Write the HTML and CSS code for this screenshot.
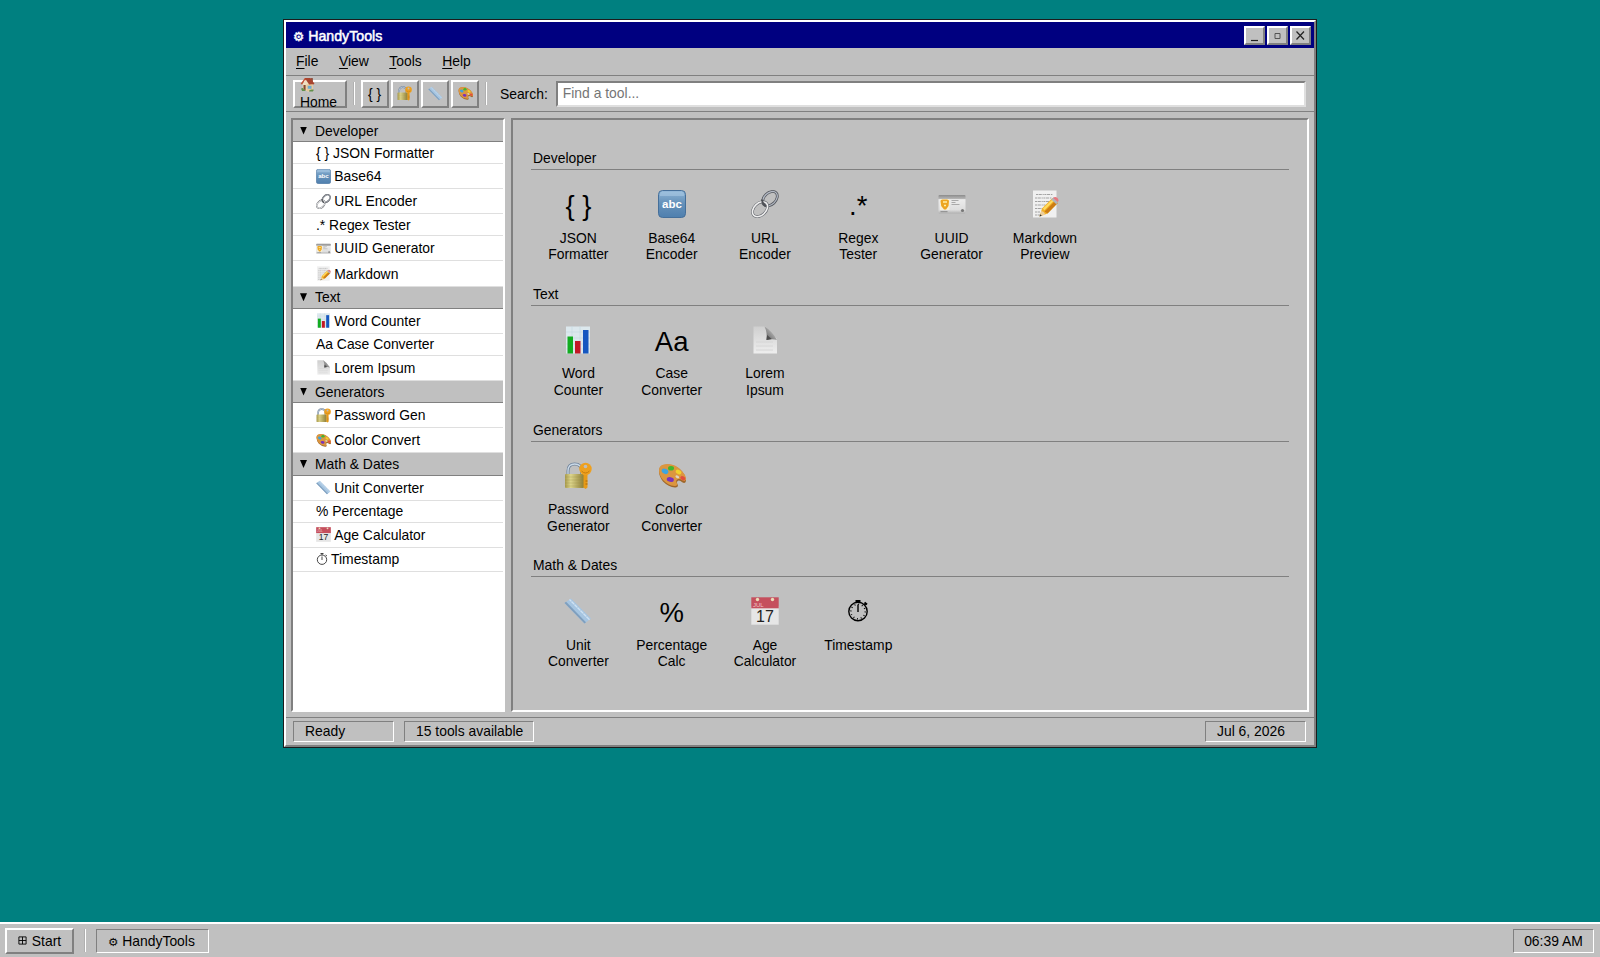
FILE: index.html
```
<!DOCTYPE html>
<html lang="en">
<head>
  <meta charset="UTF-8" />
  <meta name="viewport" content="width=device-width, initial-scale=1.0" />
  <title>HandyTools</title>
  <link rel="stylesheet" href="styles.css">
</head>
<body>
  <!-- icon sprite -->
  <svg class="sprite" width="0" height="0" aria-hidden="true">
    <defs>
      <linearGradient id="gBlue" x1="0" y1="0" x2="0" y2="1"><stop offset="0" stop-color="#8db4d6"/><stop offset=".45" stop-color="#6793bb"/><stop offset="1" stop-color="#4f7fae"/></linearGradient>
      <linearGradient id="gGold" x1="0" y1="0" x2="1" y2="0"><stop offset="0" stop-color="#a99b4c"/><stop offset=".3" stop-color="#ddd58b"/><stop offset="1" stop-color="#8d7d35"/></linearGradient>
      <linearGradient id="gPaper" x1="0" y1="0" x2="0" y2="1"><stop offset="0" stop-color="#cfcfcf"/><stop offset="1" stop-color="#eeeeee"/></linearGradient>
      <linearGradient id="gCurl" x1="0" y1="1" x2="1" y2="0"><stop offset="0" stop-color="#555"/><stop offset=".6" stop-color="#aaa"/><stop offset="1" stop-color="#f4f4f4"/></linearGradient>
      <linearGradient id="gCard" x1="0" y1="0" x2="0" y2="1"><stop offset="0" stop-color="#8c8c8c"/><stop offset=".2" stop-color="#b5b5b5"/><stop offset=".25" stop-color="#ececec"/><stop offset=".8" stop-color="#dedede"/><stop offset="1" stop-color="#b0b0b0"/></linearGradient>

      <symbol id="abc" viewBox="0 0 28 28">
        <rect x=".5" y=".5" width="27" height="27" rx="4" fill="url(#gBlue)" stroke="#456f9a"/>
        <path d="M2 4q0-2.500 3-2.500h18q3 0 3 2.500v2H2z" fill="#a9c8e2" opacity=".6"/>
        <text x="14" y="17.500" text-anchor="middle" class="abc-text">abc</text>
      </symbol>

      <symbol id="link" viewBox="0 0 28 28">
        <g fill="none">
          <ellipse cx="19" cy="8.700" rx="8.500" ry="5.800" transform="rotate(-44 19 8.700)" stroke="#55585e" stroke-width="2.800"/>
          <ellipse cx="19" cy="8.700" rx="8.500" ry="5.800" transform="rotate(-44 19 8.700)" stroke="#b4bac5" stroke-width="1.200"/>
          <ellipse cx="9" cy="19.200" rx="8.800" ry="6" transform="rotate(-44 9 19.200)" stroke="#66696f" stroke-width="2.800"/>
          <ellipse cx="9" cy="19.200" rx="8.800" ry="6" transform="rotate(-44 9 19.200)" stroke="#efefef" stroke-width="1.600"/>
          <path d="M11 9.500q0 4 4 7" stroke="#4e5055" stroke-width="2"/>
        </g>
      </symbol>

      <symbol id="idcard" viewBox="0 0 28 28">
        <rect x=".5" y="5" width="27" height="18.500" rx="1" fill="url(#gCard)"/>
        <rect x="2" y="9" width="9.500" height="11" fill="#f7f0d9"/>
        <path d="M2.500 11q0-1.500 2-1.500h4.500q2 0 2 1.500l-.5 5-2.500 3.500H6L3.200 16z" fill="#eda51f"/>
        <path d="M5 12h4M6 15.500h2" stroke="#fff0a5" stroke-width="1.500"/>
        <path d="M13.500 10.500h7M13.500 12.500h4M13.500 14.500h8" stroke="#999" stroke-width=".8"/>
        <path d="M2.500 21.700h7" stroke="#777" stroke-width=".8"/>
        <circle cx="24.500" cy="20.500" r="1.600" fill="#777"/>
      </symbol>

      <symbol id="memo" viewBox="0 0 28 28">
        <path d="M2 .5h23.500v27H2z" fill="#f0f0f0"/>
        <g fill="none" stroke="#999" stroke-width=".9" stroke-dasharray="2 .6 3.200 .8 1.200 .6">
          <path d="M5 4.500h17M4 8h17M4 11.500h14M4 15h11M4 18.500h8M4 22h5M4 25h5"/>
        </g>
        <path d="M8.500 26.500l2.500-8L21.500 8l5.300 5-10.300 10.500z" fill="#f2b025"/>
        <path d="M13.500 21.500L24 11l2.800 2-10.300 10.500z" fill="#cc7c14"/>
        <path d="M12 18.500l10-9.500 1.300 1.200-10 10z" fill="#ffdc62"/>
        <path d="M20.300 9.500l2.200-2.200 4.800 4.300-2 2.600z" fill="#aeb5bd"/>
        <path d="M22 8q2-2 4.300-.2 2 2 .5 4.300z" fill="#e7787f"/>
        <path d="M8.500 26.500l1.900-5.700q3 .9 4 3.700z" fill="#edcf9c"/>
        <path d="M8.500 26.500l.8-2.300 1.500 1.500z" fill="#333"/>
      </symbol>

      <symbol id="chart" viewBox="0 0 28 28">
        <rect x="2" y=".5" width="24" height="27" fill="#dce8ed"/>
        <path d="M2 6h24M2 12h24M2 18h24M2 23h24M8 0v28M16 0v28" stroke="#c5d7df" stroke-width=".6"/>
        <rect x="3.500" y="10.500" width="5.500" height="17" fill="#12ac20"/>
        <rect x="11" y="15" width="5.500" height="12.500" fill="#c31826"/>
        <rect x="19" y="4" width="5.500" height="23.500" fill="#1557c0"/>
      </symbol>

      <symbol id="page" viewBox="0 0 28 28">
        <path d="M2.500.5H14L26 13v14.500H2.500z" fill="url(#gPaper)"/>
        <path d="M5 16h17M5 20h17M5 24h17" stroke="#d6d6d6" stroke-width="1"/>
        <path d="M13.500.5q3 6 2 13.500 6-1.700 10.500 0Q21 5 13.500.5z" fill="url(#gCurl)"/>
        <path d="M15.500 14l.6-5 4.500 4z" fill="#4d4d4d"/>
      </symbol>

      <symbol id="lock" viewBox="0 0 28 28">
        <path d="M4 14V9q0-7 6.700-7 6.800 0 6.800 7v4" fill="none" stroke="#71849b" stroke-width="3"/>
        <path d="M4 14V9q0-7 6.700-7 6.800 0 6.800 7v4" fill="none" stroke="#cbdae8" stroke-width="1.300"/>
        <rect x="1" y="12" width="19" height="14" rx="1" fill="url(#gGold)"/>
        <path d="M1 15h19M1 18h19M1 21h19M1 24h19" stroke="#8f833e" stroke-width=".25"/>
        <path d="M19.500 12h4v13.500l-2 1.500-2-1.500z" fill="#e79a17"/>
        <path d="M23.500 19h-2M23.500 22h-2" stroke="#a9650b" stroke-width="1"/>
        <circle cx="21.500" cy="7" r="6.200" fill="#eea01f"/>
        <circle cx="21.500" cy="4.500" r="1.800" fill="#bdbdbd"/>
        <path d="M17.500 9q4 4 8 0" fill="none" stroke="#c77c0d"/>
      </symbol>

      <symbol id="palette" viewBox="0 0 28 28">
        <path d="M1 9Q1 2.500 9.500 2.500q8.500.2 14.500 7 4.500 5 4 9.500-.8 3-3.800 1.200-3.200-2.700-5-.8-.8 1 .5 3.300 1 3-2.700 2.800-6.500-.4-12-6Q1 14.500 1 9z" fill="#9e672b"/>
        <path d="M1 8Q1 2 9.500 2q8.500.2 14.500 7 4.500 5 4 8.500-.8 2.500-3.800.7-3.200-2.200-5.500-.3-1 1.200.3 3.500 1 3-2.500 2.600-6.500-.4-11.500-6Q1 13.500 1 8z" fill="#dc963f"/>
        <ellipse cx="7" cy="9.300" rx="3.500" ry="2.500" transform="rotate(25 7 9.300)" fill="#3da5df"/>
        <ellipse cx="13" cy="6.200" rx="3" ry="2.300" fill="#41b62d"/>
        <ellipse cx="20.500" cy="10" rx="3" ry="2.100" transform="rotate(30 20.500 10)" fill="#f1d22b"/>
        <ellipse cx="12.300" cy="17.500" rx="3.600" ry="2.400" transform="rotate(10 12.300 17.500)" fill="#7b33bb"/>
        <ellipse cx="24.800" cy="16.200" rx="2.600" ry="1.900" transform="rotate(30 24.800 16.200)" fill="#e24d3c"/>
        <ellipse cx="19.300" cy="14.800" rx="2" ry="1.300" transform="rotate(30 19.300 14.800)" fill="#ddd4c5"/>
      </symbol>

      <symbol id="ruler" viewBox="0 0 28 28">
        <path d="M.5 6L7 1.500 27 21.500l-6.500 5z" fill="#a6c5e1"/>
        <path d="M.5 6l1.600-1.200L22 25.300l-1.500 1.200z" fill="#7f9fbe"/>
        <path d="M5.500 2.500L25.500 22.700" stroke="#cfe2f3" stroke-width="1.300"/>
        <path d="M8.500 3.500l-2 1.500M11.500 6.500l-2 1.500M14.500 9.500l-2 1.500M17.500 12.500l-2 1.500M20.500 15.500l-2 1.500M23.500 18.500l-2 1.500" stroke="#9ab8d3" stroke-width=".5"/>
      </symbol>

      <symbol id="calendar" viewBox="0 0 28 28">
        <rect x=".3" y="9" width="27.400" height="18.700" fill="#e6e6e6"/>
        <rect x=".3" y=".3" width="27.400" height="11" fill="#c54f5d"/>
        <circle cx="6.500" cy="2.500" r="1.700" fill="#eadbb8"/>
        <circle cx="21.500" cy="2.500" r="1.700" fill="#eadbb8"/>
        <text x="2" y="10" class="cal-month">JUL</text>
        <text x="14" y="25" text-anchor="middle" class="cal-day">17</text>
      </symbol>

      <symbol id="stopwatch" viewBox="0 0 28 28">
        <g fill="none" stroke="#000">
          <circle cx="14" cy="14.500" r="9.200" stroke-width="1.400"/>
          <circle cx="14" cy="14.500" r="7.200" stroke-width="1.500" stroke-dasharray=".9 2.870"/>
          <path d="M14 15V7.500M14 5V3.500M20.500 8l1.500-1.500" stroke-width="1.400"/>
          <path d="M11.500 4h5M20.500 5.500l2.500 2" stroke-width="2"/>
        </g>
      </symbol>

      <symbol id="watch-small" viewBox="0 0 14 14">
        <g fill="none" stroke="#333" stroke-width=".9">
          <circle cx="7" cy="7.700" r="4.700"/>
          <path d="M7 8V4.500M5.500 1.500h3M7 1.500V3M10.500 3l1.500 1"/>
        </g>
      </symbol>

      <symbol id="house" viewBox="0 0 28 28">
        <path d="M20 2h4v9h-4z" fill="#8c4e3b"/>
        <path d="M5 12l7-8 12 8v13l-9 2-10-4z" fill="#f0dfc1"/>
        <path d="M12 14l12-2v13l-9 2-3-1z" fill="#e5c89c"/>
        <path d="M1 13L9 2h10l8 11-3 1-7-9-8 1-5 8z" fill="#c45032"/>
        <path d="M9 2h10l8 11-10 1z" fill="#a84530"/>
        <path d="M6.500 15h4v10l-4-2z" fill="#874b2d"/>
        <path d="M14.500 16.500h7V22h-7z" fill="#6eacd0"/>
        <path d="M2 22q3-3 5 1l4 3H4zM17 25q5-3 9-1l-2 3h-7z" fill="#61904a"/>
      </symbol>
    </defs>
  </svg>

  <div class="desktop">
    <div class="window">
      <div class="title-bar">
        <div class="title-text"><span class="gear">⚙</span> HandyTools</div>
        <div class="title-buttons">
          <button><svg viewBox="0 0 17 15"><path d="M5 12.500h7" /></svg></button>
          <button><svg class="dim" viewBox="0 0 17 15"><path d="M6 5.500h5v5h-5z" /></svg></button>
          <button><svg viewBox="0 0 17 15"><path d="M4.500 3.500l7.500 8M12 3.500l-7.500 8" /></svg></button>
        </div>
      </div>

      <div class="menu-bar">
        <span><u>F</u>ile</span>
        <span><u>V</u>iew</span>
        <span><u>T</u>ools</span>
        <span><u>H</u>elp</span>
      </div>

      <div class="toolbar">
        <button class="tool-btn home-btn"><svg class="icon"><use href="#house"/></svg><span>Home</span></button>
        <div class="separator"></div>
        <div class="tool-group">
          <button class="tool-btn">{ }</button>
          <button class="tool-btn"><svg class="icon"><use href="#lock"/></svg></button>
          <button class="tool-btn"><svg class="icon"><use href="#ruler"/></svg></button>
          <button class="tool-btn"><svg class="icon"><use href="#palette"/></svg></button>
        </div>
        <div class="separator"></div>
        <label for="search">Search:</label>
        <input id="search" type="text" placeholder="Find a tool...">
      </div>

      <div class="main">
        <div class="sidebar">
          <div class="category"><span class="arrow"></span>Developer</div>
          <div class="item">{ } JSON Formatter</div>
          <div class="item pic"><svg class="icon"><use href="#abc"/></svg>Base64</div>
          <div class="item pic"><svg class="icon"><use href="#link"/></svg>URL Encoder</div>
          <div class="item">.* Regex Tester</div>
          <div class="item pic"><svg class="icon"><use href="#idcard"/></svg>UUID Generator</div>
          <div class="item pic"><svg class="icon"><use href="#memo"/></svg>Markdown</div>
          <div class="category"><span class="arrow"></span>Text</div>
          <div class="item pic"><svg class="icon"><use href="#chart"/></svg>Word Counter</div>
          <div class="item">Aa Case Converter</div>
          <div class="item pic"><svg class="icon"><use href="#page"/></svg>Lorem Ipsum</div>
          <div class="category"><span class="arrow"></span>Generators</div>
          <div class="item pic"><svg class="icon"><use href="#lock"/></svg>Password Gen</div>
          <div class="item pic"><svg class="icon"><use href="#palette"/></svg>Color Convert</div>
          <div class="category"><span class="arrow"></span>Math &amp; Dates</div>
          <div class="item pic"><svg class="icon"><use href="#ruler"/></svg>Unit Converter</div>
          <div class="item">% Percentage</div>
          <div class="item pic"><svg class="icon"><use href="#calendar"/></svg>Age Calculator</div>
          <div class="item watch"><svg class="icon"><use href="#watch-small"/></svg>Timestamp</div>
        </div>

        <div class="content">
          <div class="section">
            <div class="section-title">Developer</div>
            <div class="tiles">
              <div class="tile"><div class="tile-icon">{ }</div>JSON<br>Formatter</div>
              <div class="tile"><div class="tile-icon"><svg><use href="#abc"/></svg></div>Base64<br>Encoder</div>
              <div class="tile"><div class="tile-icon"><svg><use href="#link"/></svg></div>URL<br>Encoder</div>
              <div class="tile"><div class="tile-icon">.*</div>Regex<br>Tester</div>
              <div class="tile"><div class="tile-icon"><svg><use href="#idcard"/></svg></div>UUID<br>Generator</div>
              <div class="tile"><div class="tile-icon"><svg><use href="#memo"/></svg></div>Markdown<br>Preview</div>
            </div>
          </div>
          <div class="section">
            <div class="section-title">Text</div>
            <div class="tiles">
              <div class="tile"><div class="tile-icon"><svg><use href="#chart"/></svg></div>Word<br>Counter</div>
              <div class="tile"><div class="tile-icon">Aa</div>Case<br>Converter</div>
              <div class="tile"><div class="tile-icon"><svg><use href="#page"/></svg></div>Lorem<br>Ipsum</div>
            </div>
          </div>
          <div class="section">
            <div class="section-title">Generators</div>
            <div class="tiles">
              <div class="tile"><div class="tile-icon"><svg><use href="#lock"/></svg></div>Password<br>Generator</div>
              <div class="tile"><div class="tile-icon"><svg><use href="#palette"/></svg></div>Color<br>Converter</div>
            </div>
          </div>
          <div class="section">
            <div class="section-title">Math &amp; Dates</div>
            <div class="tiles">
              <div class="tile"><div class="tile-icon"><svg><use href="#ruler"/></svg></div>Unit<br>Converter</div>
              <div class="tile"><div class="tile-icon">%</div>Percentage<br>Calc</div>
              <div class="tile"><div class="tile-icon"><svg><use href="#calendar"/></svg></div>Age<br>Calculator</div>
              <div class="tile"><div class="tile-icon"><svg><use href="#stopwatch"/></svg></div>Timestamp</div>
            </div>
          </div>
        </div>
      </div>

      <div class="status-bar">
        <div class="status-box">Ready</div>
        <div class="status-box">15 tools available</div>
        <div class="status-box date">Jul 6, 2026</div>
      </div>
    </div>
  </div>

  <div class="taskbar">
    <button class="start-btn"><svg viewBox="0 0 10 10"><path d="M1 1h8v8H1zM5 1v8M1 5h8"/></svg>Start</button>
    <div class="separator"></div>
    <div class="task"><span class="gear">⚙</span> HandyTools</div>
    <div class="clock">06:39 AM</div>
  </div>
</body>
</html>
```
FILE: styles.css
```
* {
  box-sizing: border-box;
}

body {
  margin: 0;
  height: 100vh;
  display: flex;
  flex-direction: column;
  overflow: hidden;
  background: #008080;
  color: #000;
  font-family: "Liberation Sans", Arial, sans-serif;
  font-size: 13.9px;
  line-height: 16px;
}

button, input {
  font: inherit;
  color: inherit;
}

.sprite {
  position: absolute;
}

.abc-text {
  font-family: "Liberation Sans", sans-serif;
  font-size: 11.5px;
  font-weight: bold;
  fill: #fff;
}

.cal-month {
  font-family: "Liberation Sans", sans-serif;
  font-size: 6px;
  fill: #efc4c6;
}

.cal-day {
  font-family: "Liberation Sans", sans-serif;
  font-size: 16px;
  fill: #222;
}

.icon {
  flex: none;
  width: 15px;
  height: 15px;
}

.gear {
  font-family: "DejaVu Sans", sans-serif;
  font-size: 11.5px;
  font-weight: normal;
}

.desktop {
  flex: 1;
  min-height: 0;
  padding-top: 20px;
}

/* window frame */
.window {
  width: 1032px;
  height: 727px;
  margin: 0 auto;
  display: flex;
  flex-direction: column;
  background: #c0c0c0;
  border: 2px solid;
  border-color: #fff #808080 #808080 #fff;
  box-shadow: 0 0 0 1px #1c1c1c;
}

.title-bar {
  height: 26px;
  padding: 4px 3px 3px 7px;
  display: flex;
  justify-content: space-between;
  align-items: center;
  background: #000080;
  color: #fff;
}

.title-text {
  padding-top: 1px;
  font-size: 14.2px;
  -webkit-text-stroke: 0.5px #fff;
}

.title-text .gear {
  font-size: 12.5px;
}

.title-buttons {
  display: flex;
  gap: 2px;
}

.title-buttons button {
  width: 21px;
  height: 19px;
  padding: 0;
  background: #c0c0c0;
  border: 2px solid;
  border-color: #fff #808080 #808080 #fff;
}

.title-buttons svg {
  display: block;
  width: 17px;
  height: 15px;
  fill: none;
  stroke: #222;
  stroke-width: 1.2;
}

.title-buttons svg.dim {
  stroke: #555;
  stroke-width: 1;
}

.menu-bar {
  height: 28px;
  display: flex;
  align-items: center;
  gap: 20.5px;
  padding: 0 0 1px 10px;
  border-bottom: 1px solid #808080;
}

.menu-bar u {
  text-underline-offset: 2px;
}

/* toolbar */
.toolbar {
  height: 36px;
  display: flex;
  align-items: center;
  padding: 0 8px 0 7px;
  border-bottom: 1px solid #808080;
}

.tool-btn {
  width: 28px;
  height: 28px;
  padding: 0;
  display: flex;
  align-items: center;
  justify-content: center;
  background: #c0c0c0;
  border: 2px solid;
  border-color: #fff #808080 #808080 #fff;
}

.home-btn {
  width: 54px;
  padding-left: 5px;
  flex-direction: column;
  align-items: flex-start;
}

.home-btn span {
  margin-top: 2px;
}

.tool-group {
  display: flex;
  gap: 2.3px;
}

.separator {
  width: 2px;
  height: 23px;
  margin: 0 6px;
  border-left: 1px solid #b0b0b0;
  border-right: 1px solid #fff;
}

.toolbar .separator {
  margin-right: 5.5px;
}

.toolbar label {
  margin: 0 8px 0 7px;
}

.toolbar input {
  flex: 1;
  height: 26px;
  padding: 0 5px 1px;
  background: #fff;
  border: 2px solid;
  border-color: #808080 #dfdfdf #dfdfdf #808080;
  border-radius: 0;
  outline: none;
}

.toolbar input::placeholder {
  color: #757575;
}

/* sidebar and content */
.main {
  flex: 1;
  min-height: 0;
  display: flex;
  gap: 6px;
  padding: 6px 5px 5px;
}

.sidebar {
  width: 214px;
  background: #fff;
  border: 2px solid;
  border-color: #808080 #fff #fff #808080;
}

.category {
  height: 22.2px;
  display: flex;
  align-items: center;
  padding-left: 7px;
  background: #c0c0c0;
  border-bottom: 1px solid #808080;
}

.arrow {
  width: 7px;
  height: 8px;
  margin-right: 8px;
  background: #000;
  clip-path: polygon(0 0, 100% 0, 50% 100%);
}

.item {
  height: 22px;
  display: flex;
  align-items: center;
  padding-left: 23px;
  border-bottom: 1px solid #dfdfdf;
}

.item.pic {
  height: 25.1px;
}

.item.pic .icon {
  margin-right: 3.3px;
}

.item.watch {
  height: 24px;
  padding-bottom: 1px;
}

.item.watch .icon {
  width: 14px;
  height: 14px;
  margin: 0 2px 0 -1px;
}

.content {
  flex: 1;
  padding: 30px 18px 0;
  border: 2px solid;
  border-color: #808080 #fff #fff #808080;
}

.section {
  height: 135.8px;
}

.section-title {
  height: 20px;
  padding-left: 2px;
  border-bottom: 1px solid #808080;
}

.tiles {
  display: flex;
  gap: 9.3px;
  padding: 16px 0 0 5.4px;
}

.tile {
  width: 84px;
  text-align: center;
  line-height: 16.4px;
}

.tile-icon {
  height: 43.6px;
  display: flex;
  justify-content: center;
  font-size: 27.5px;
  line-height: 40px;
}

.tile-icon svg {
  width: 28px;
  height: 28px;
  margin-top: 4px;
}

/* status bar */
.status-bar {
  height: 28px;
  display: flex;
  align-items: center;
  gap: 10px;
  padding: 0 8px 0 7px;
  border-top: 1px solid #808080;
}

.status-box {
  height: 21px;
  min-width: 101px;
  padding: 1px 10px 1px 11px;
  border: 1px solid;
  border-color: #808080 #fff #fff #808080;
}

.status-box.date {
  margin-left: auto;
}

/* taskbar */
.taskbar {
  height: 35px;
  display: flex;
  align-items: center;
  padding: 0 6px 0 5px;
  background: #c0c0c0;
  border-top: 2px solid #fff;
}

.start-btn {
  width: 69px;
  height: 26px;
  padding: 0;
  display: flex;
  align-items: center;
  justify-content: center;
  gap: 5px;
  background: #c0c0c0;
  border: 2px solid;
  border-color: #fff #808080 #808080 #fff;
}

.start-btn svg {
  width: 9px;
  height: 9px;
  fill: none;
  stroke: #000;
}

.taskbar .separator {
  margin: 0 10px;
}

.task, .clock {
  height: 24px;
  padding: 3px 0;
  text-align: center;
  border: 1px solid;
  border-color: #808080 #fff #fff #808080;
}

.task {
  width: 113px;
  padding-right: 2px;
}

.clock {
  width: 81px;
  margin-left: auto;
}
```
